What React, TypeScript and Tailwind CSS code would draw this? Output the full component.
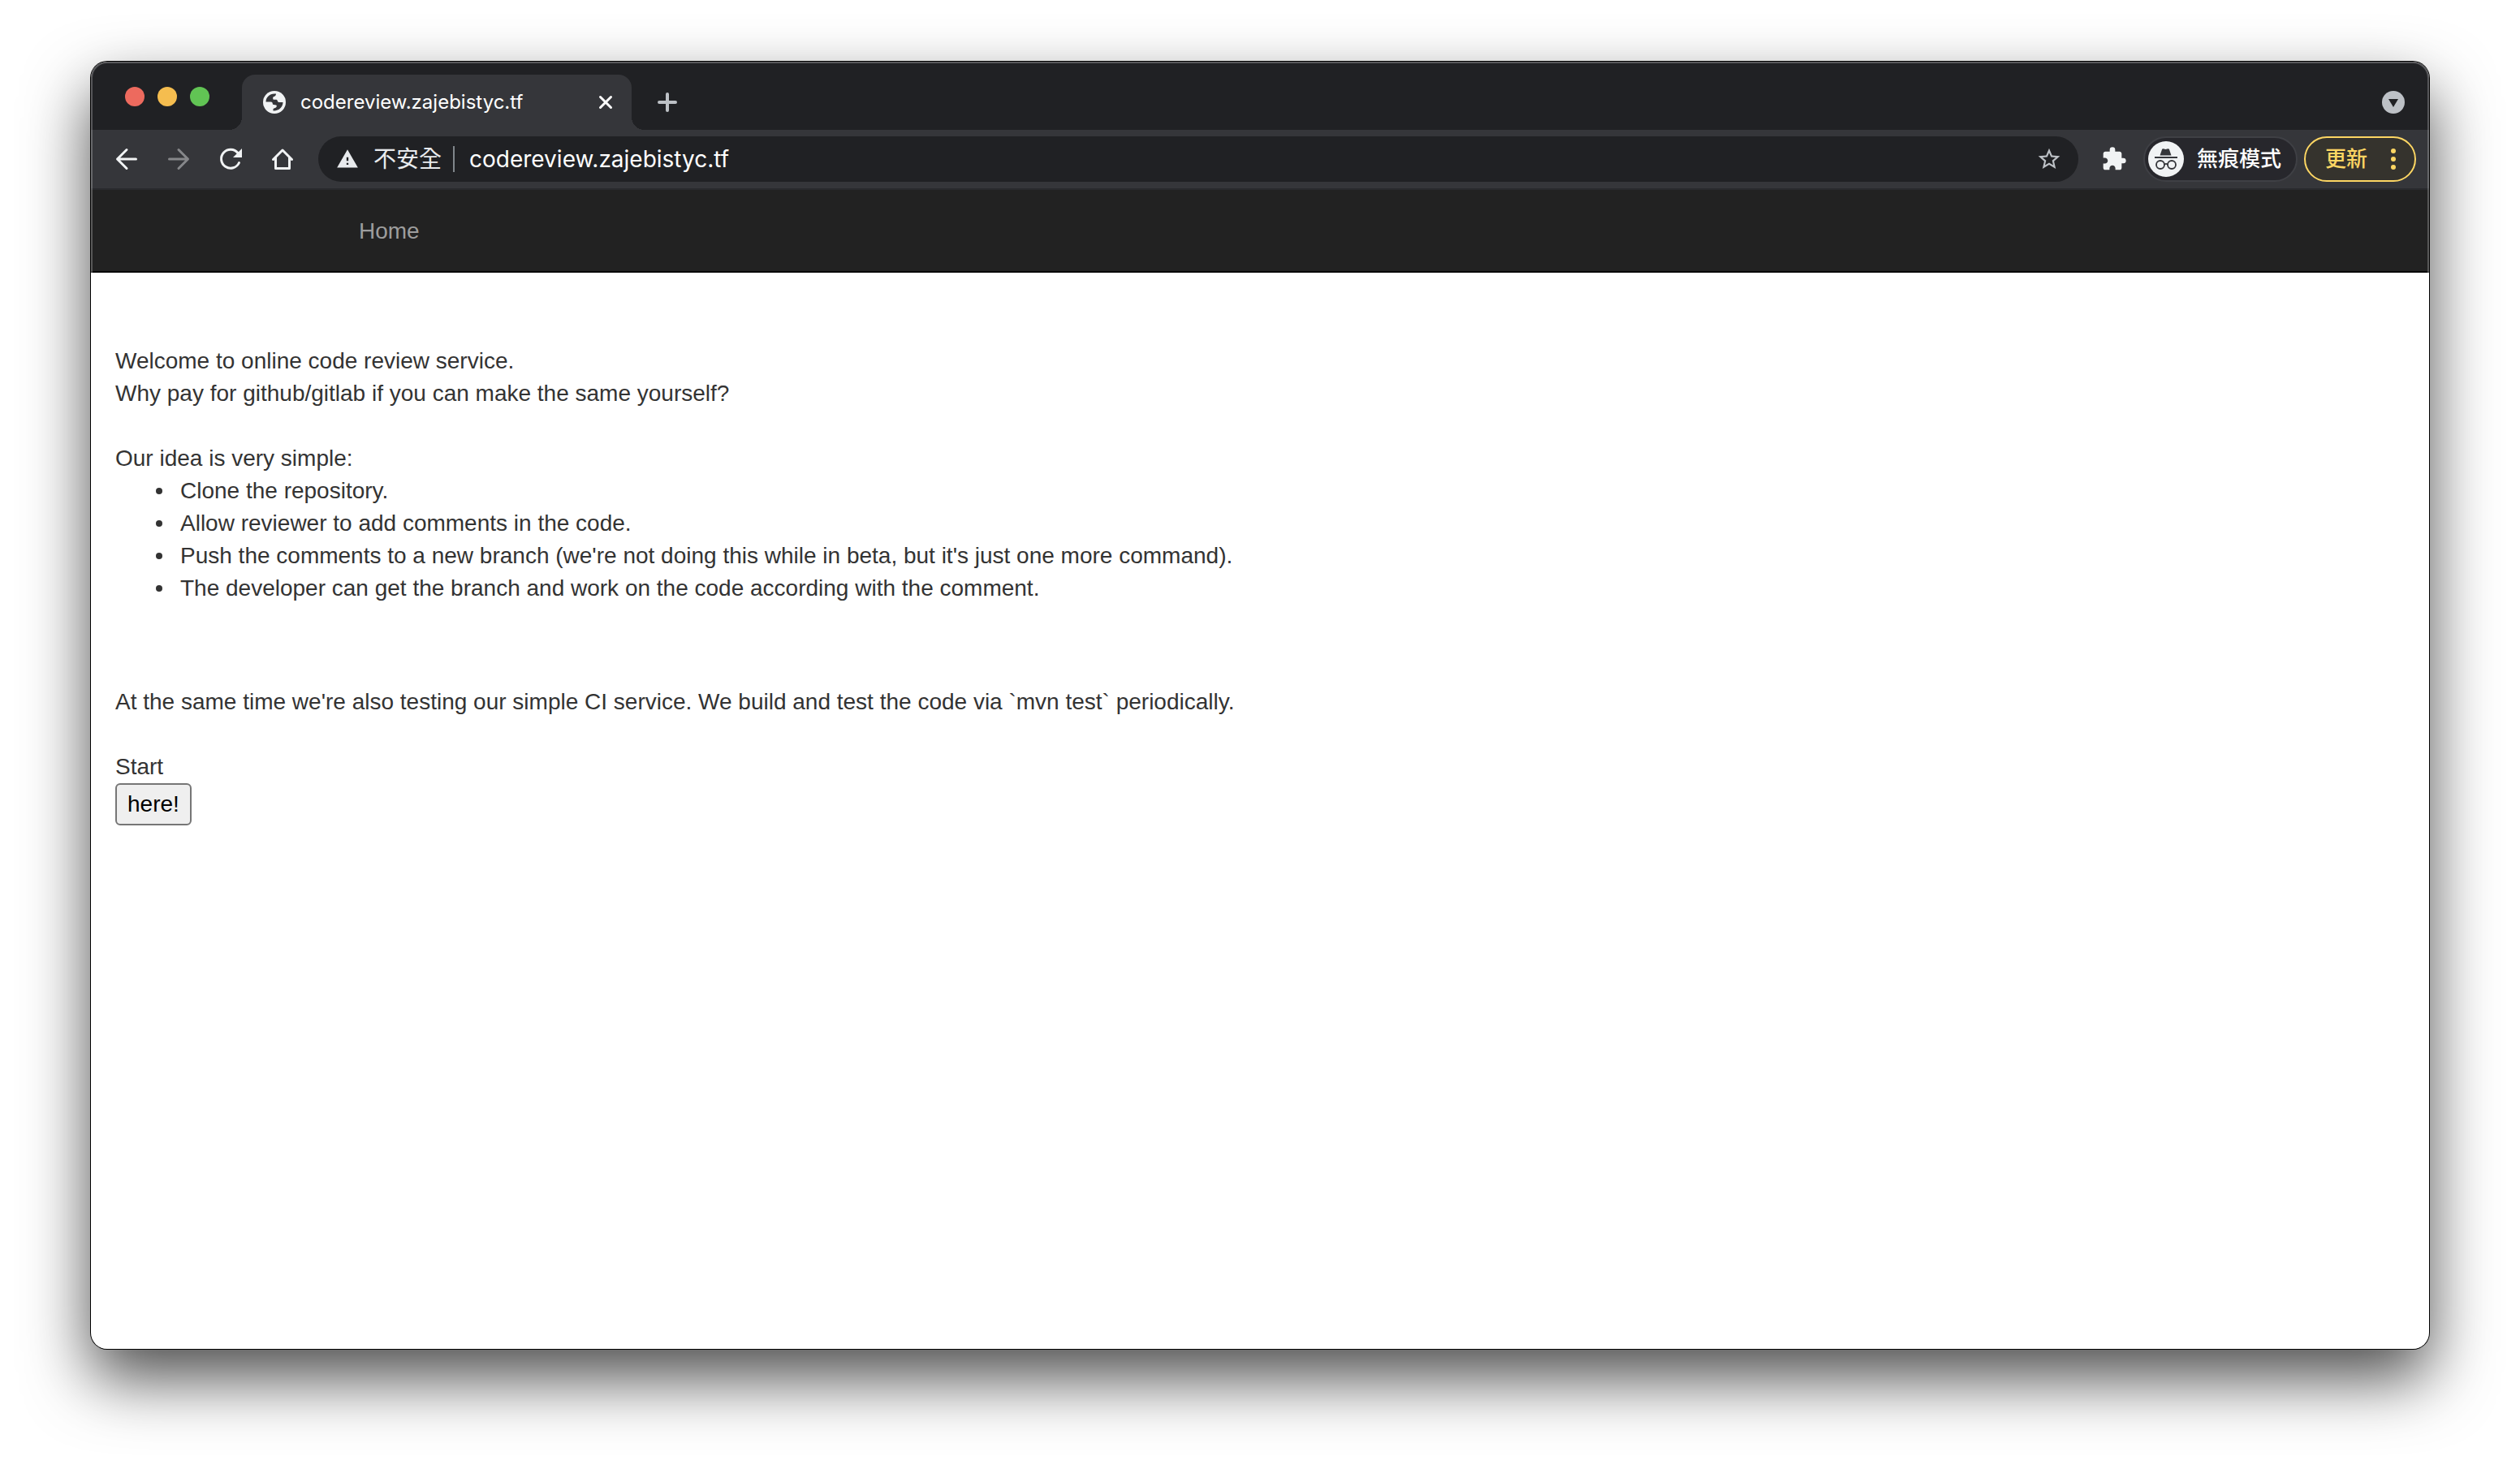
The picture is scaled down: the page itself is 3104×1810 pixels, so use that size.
import type { ReactNode } from 'react';
import { MdExtension, MdStarBorder, MdWarning } from 'react-icons/md';

function IconButton({ label, children }: { label: string; children: ReactNode }) {
  return (
    <button type="button" aria-label={label} className="flex size-14 shrink-0 items-center justify-center rounded-full">
      {children}
    </button>
  );
}

function Stroke({ children, className, width = 3 }: { children: ReactNode; className: string; width?: number }) {
  return (
    <svg
      viewBox="0 0 32 32"
      className={className}
      fill="none"
      stroke="currentColor"
      strokeWidth={width}
      strokeLinecap="round"
      strokeLinejoin="round"
      aria-hidden="true"
    >
      {children}
    </svg>
  );
}

function GlobeIcon() {
  return (
    <svg viewBox="0 0 28 28" className="size-7 shrink-0" aria-hidden="true">
      <circle cx="14" cy="14" r="14" fill="#f1f3f4" />
      <path
        d="M3.500 13.500C3.500 8 8 3.500 14 3.500H16C16 5.800 14.800 6.500 12.800 7.300C11.800 8 12 10.600 13 10.800H16.500C18 10.800 17.600 14 19.500 14H24.500C24.500 20 19.500 24.800 12.500 24.400V22C14.500 21 17 20.600 16.800 18.200C16.600 16.800 12.600 17.600 12 16.400C11.600 14.500 11.500 13.500 9.500 13.500Z"
        fill="#35363a"
      />
    </svg>
  );
}

function TabStrip() {
  return (
    <div className="flex h-[84px] items-end justify-between bg-[#202124]">
      <div className="flex items-end">
        <div className="flex h-[82px] w-[170px] items-center gap-4 pl-[42px]">
          <button type="button" aria-label="Close window" className="size-6 rounded-full bg-[#ed6a5e]" />
          <button type="button" aria-label="Minimize window" className="size-6 rounded-full bg-[#f5bd4f]" />
          <button type="button" aria-label="Zoom window" className="size-6 rounded-full bg-[#61c454]" />
        </div>
        <div className="size-4 bg-[radial-gradient(circle_at_0_0,#202124_16px,#35363a_16px)]" />
        <div className="flex h-[68px] w-[480px] items-center rounded-t-2xl bg-[#35363a] pr-4 pl-[26px] text-white">
          <GlobeIcon />
          <span className="ml-[18px] flex-1 text-2xl">codereview.zajebistyc.tf</span>
          <button type="button" aria-label="Close tab" className="flex size-8 items-center justify-center">
            <Stroke className="size-8">
              <path d="M9.500 9.500 22.500 22.500M22.500 9.500 9.500 22.500" />
            </Stroke>
          </button>
        </div>
        <div className="size-4 bg-[radial-gradient(circle_at_100%_0,#202124_16px,#35363a_16px)]" />
        <button type="button" aria-label="New tab" className="flex h-[68px] w-14 items-center justify-center text-[#bdc1c6]">
          <Stroke className="size-8" width={4}>
            <path d="M16 6v20M6 16h20" />
          </Stroke>
        </button>
      </div>
      <button type="button" aria-label="Search tabs" className="mr-[30px] flex h-[68px] items-center">
        <svg viewBox="0 0 28 28" className="size-7" aria-hidden="true">
          <circle cx="14" cy="14" r="14" fill="#bdc1c6" />
          <path d="M8 10h12l-6 10z" fill="#202124" />
        </svg>
      </button>
    </div>
  );
}

function IncognitoIcon() {
  return (
    <svg viewBox="0 0 44 44" className="size-11 shrink-0" aria-hidden="true">
      <circle cx="22" cy="22" r="22" fill="#f1f3f4" />
      <path d="M14.500 17.500 17 10.200Q17.500 9 18.700 9.300L21.500 10 24.300 9.300Q25.500 9 26 10.200L28.500 17.500Z" fill="#35363a" />
      <path d="M8 20h28" stroke="#35363a" strokeWidth="2" />
      <g fill="none" stroke="#35363a" strokeWidth="1.800">
        <circle cx="15" cy="29" r="5" />
        <circle cx="29" cy="29" r="5" />
        <path d="M20 28.500q2-1.200 4 0" />
      </g>
    </svg>
  );
}

function Toolbar() {
  return (
    <div className="flex h-[74px] items-center border-b-2 border-[#292a2d] bg-[#35363a] px-4 text-[#f1f3f4]">
      <nav className="flex gap-2" aria-label="Browser">
        <IconButton label="Back">
          <Stroke className="size-8">
            <path d="M27.500 16H5M16 4.500 4.500 16 16 27.500" />
          </Stroke>
        </IconButton>
        <IconButton label="Forward">
          <Stroke className="size-8 text-[#86878a]">
            <path d="M4.500 16H27M16 4.500 27.500 16 16 27.500" />
          </Stroke>
        </IconButton>
        <IconButton label="Reload">
          <Stroke className="size-8">
            <path d="M26.500 20.500A11.500 11.500 0 1 1 25 8.500" />
            <path d="M30 3V14H19Z" fill="currentColor" stroke="none" />
          </Stroke>
        </IconButton>
        <IconButton label="Home">
          <Stroke className="size-8">
            <path d="M4.500 16.500 16 5 27.500 16.500M7.500 14.500V27.500H24.500V14.500" />
          </Stroke>
        </IconButton>
      </nav>
      <div className="ml-4 flex h-14 flex-1 items-center rounded-full bg-[#202124] px-5 text-[28px] leading-8">
        <MdWarning className="size-8 shrink-0 p-0.5 text-[#e8eaed]" />
        <span className="ml-4 shrink-0 text-[#e8eaed]">不安全</span>
        <span className="ml-3.5 h-8 w-0.5 shrink-0 bg-[#80868b]" />
        <input
          type="text"
          aria-label="Address"
          defaultValue="codereview.zajebistyc.tf"
          className="ml-[18px] min-w-0 flex-1 bg-transparent text-white outline-none"
        />
        <button type="button" aria-label="Bookmark this page" className="text-[#bdc1c6]">
          <MdStarBorder className="size-8" />
        </button>
      </div>
      <div className="ml-4 flex items-center gap-2 text-[26px] leading-8 font-medium">
        <IconButton label="Extensions">
          <MdExtension className="size-8" />
        </IconButton>
        <button type="button" className="flex h-14 items-center gap-4 rounded-full border-2 border-[#3f4045] bg-[#27272c] pr-[18px] pl-1 text-white">
          <IncognitoIcon />
          <span>無痕模式</span>
        </button>
        <button type="button" className="flex h-14 items-center gap-[22px] rounded-full border-2 border-[#fdd663] bg-[#35332d] pr-4 pl-6 text-[#fdd663]">
          <span>更新</span>
          <svg viewBox="0 0 20 32" className="h-8 w-5" fill="currentColor" aria-hidden="true">
            <circle cx="10" cy="6" r="3" />
            <circle cx="10" cy="16" r="3" />
            <circle cx="10" cy="26" r="3" />
          </svg>
        </button>
      </div>
    </div>
  );
}

const steps = [
  'Clone the repository.',
  'Allow reviewer to add comments in the code.',
  "Push the comments to a new branch (we're not doing this while in beta, but it's just one more command).",
  'The developer can get the branch and work on the code according with the comment.',
];

function Page() {
  return (
    <div className="flex-1 font-['Liberation_Sans',Arial,sans-serif] text-[28px] leading-10 text-[#333333]">
      <nav className="flex h-[102px] items-center border-b-2 border-[#080808] bg-[#222222] pt-0.5">
        <a href="#home" className="ml-[300px] px-[30px] text-[#9d9d9d]">
          Home
        </a>
      </nav>
      <main className="px-[30px] pt-[89px]">
        <p>Welcome to online code review service.</p>
        <p>Why pay for github/gitlab if you can make the same yourself?</p>
        <p className="mt-10">Our idea is very simple:</p>
        <ul className="pl-[50px]">
          {steps.map((step) => (
            <li
              key={step}
              className="flex items-center gap-[22px] before:size-2 before:shrink-0 before:rounded-full before:bg-[#333333]"
            >
              {step}
            </li>
          ))}
        </ul>
        <p className="mt-[100px]">
          At the same time we're also testing our simple CI service. We build and test the code via `mvn test` periodically.
        </p>
        <p className="mt-10">Start</p>
        <button type="button" className="flex h-[52px] items-center rounded-md border-2 border-[#767676] bg-[#efefef] px-[13px] text-black">
          here!
        </button>
      </main>
    </div>
  );
}

export default function App() {
  return (
    <div className="min-h-screen bg-white px-28 pt-[76px] pb-[148px] font-[Inter,'Noto_Sans_CJK_TC',sans-serif]">
      <div className="relative flex min-h-[calc(100vh-224px)] flex-col overflow-hidden rounded-[20px] bg-white shadow-[0_0_0_1px_#000,0_36px_80px_rgba(0,0,0,0.7)]">
        <TabStrip />
        <Toolbar />
        <Page />
        <div className="pointer-events-none absolute inset-0 rounded-[20px] border-2 border-white/25" />
      </div>
    </div>
  );
}
